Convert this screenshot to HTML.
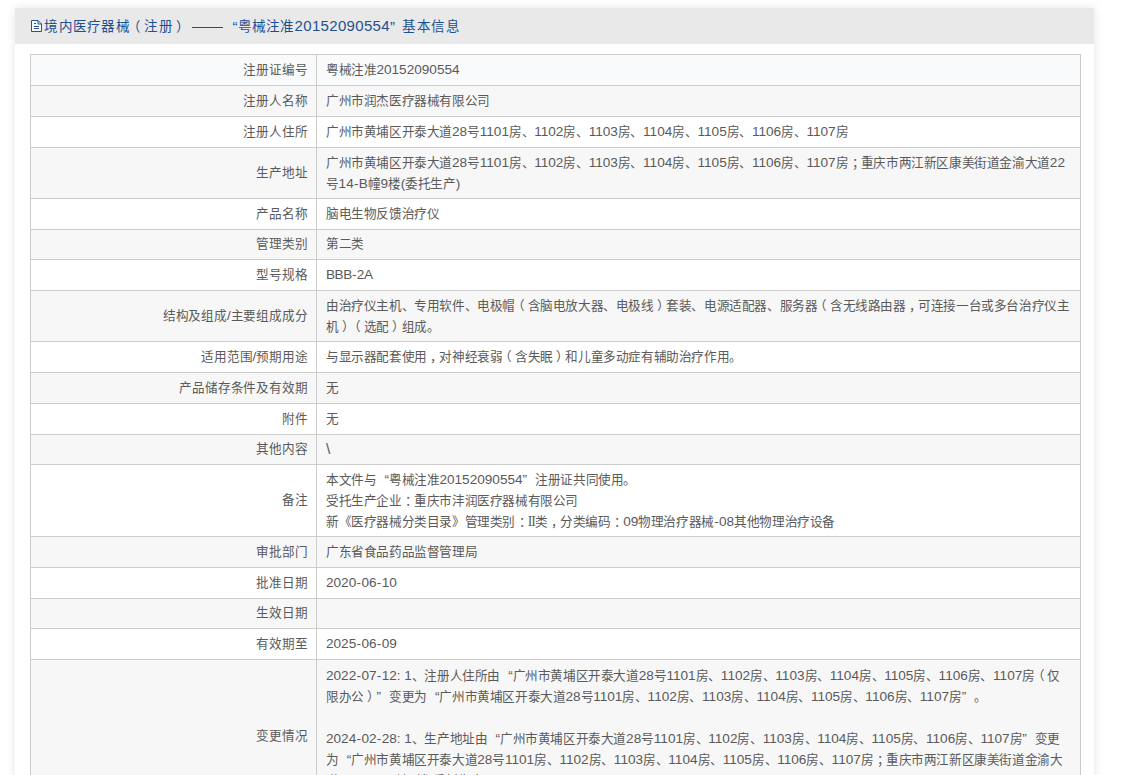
<!DOCTYPE html>
<html lang="zh-CN">
<head>
<meta charset="utf-8">
<style>
html,body{margin:0;padding:0;background:#fff;width:1128px;height:775px;overflow:hidden;}
body{font-family:"Liberation Sans",sans-serif;font-size:12.6px;color:#5a5a5a;text-spacing-trim:space-all;}
.panel{position:absolute;left:15px;top:8px;width:1079px;height:900px;background:#fff;box-shadow:0 0 9px rgba(0,0,0,0.11);}
.hd{position:absolute;left:0;top:0;width:1079px;height:36px;background:#e9e9e9;}
.hdt{position:absolute;top:8.8px;color:#1d5091;white-space:nowrap;line-height:20px;font-size:13.5px;}
.hdt .n{font-size:15px;}
.ico{position:absolute;left:13px;top:8px;}
.row{position:absolute;left:30px;width:1050px;box-sizing:border-box;border-top:1px solid #ccc;}
.row.g{background:#f7f7f7;}
.row.h{background:#f9fafc;}
.lb{position:absolute;right:772.5px;letter-spacing:-0.2px;line-height:21px;white-space:nowrap;text-align:right;}
.vl{position:absolute;left:296px;letter-spacing:-0.4px;line-height:21px;white-space:nowrap;}
.n{font-size:13.6px;letter-spacing:0;line-height:0;}
.hy{display:inline-block;padding:0 0.3px;font-size:13.6px;letter-spacing:0;line-height:0;}
.ql{display:inline-block;width:12.6px;text-align:right;font-size:13.6px;letter-spacing:0;line-height:0;}
.qr{display:inline-block;width:12.6px;text-align:left;font-size:13.6px;letter-spacing:0;line-height:0;}
.pl{position:relative;left:-3px;}
.pr{position:relative;left:3px;}
.pc{position:relative;left:3.5px;}
.r2{font-family:"Liberation Serif",serif;font-size:13.6px;letter-spacing:-0.9px;line-height:0;}
.vline{position:absolute;width:1px;background:#ccc;}
</style>
</head>
<body>
<div class="panel">
 <div class="hd">
  <svg class="ico" width="18" height="18" viewBox="0 0 18 18"><path d="M3.5 4.5H10L13.5 8V15.5H3.5Z" fill="#f4f7fb" stroke="#2f5288" stroke-width="1"/><path d="M10 4.5V8H13.5M6 7.5H8M6 10.5H11M6 12.5H11" fill="none" stroke="#2f5288" stroke-width="1"/></svg>
  <div class="hdt" style="left:29.3px;letter-spacing:1.3px">境内医疗器械<span class="pl">（</span>注册<span class="pr">）</span></div>
  <div style="position:absolute;left:177px;top:18.5px;width:31px;height:1px;background:#1d5091"></div>
  <div class="hdt" style="left:217.5px;font-size:15px">“</div>
  <div class="hdt" style="left:223px;letter-spacing:1.15px">粤械注准<span class="n" style="font-size:15px;letter-spacing:0.32px">20152090554</span></div>
  <div class="hdt" style="left:375px;font-size:15px">”</div>
  <div class="hdt" style="left:387.3px;letter-spacing:1.6px">基本信息</div>
 </div>
</div>
<div class="row h" style="top:54px;height:31px"><div class="lb" style="top:4.50px">注册证编号</div><div class="vl" style="top:4.50px">粤械注准<span class="n">20152090554</span></div></div>
<div class="row g" style="top:85px;height:31px"><div class="lb" style="top:4.50px">注册人名称</div><div class="vl" style="top:4.50px">广州市润杰医疗器械有限公司</div></div>
<div class="row" style="top:116px;height:31px"><div class="lb" style="top:4.50px">注册人住所</div><div class="vl" style="top:4.50px">广州市黄埔区开泰大道<span class="n">28</span>号<span class="n">1101</span>房、<span class="n">1102</span>房、<span class="n">1103</span>房、<span class="n">1104</span>房、<span class="n">1105</span>房、<span class="n">1106</span>房、<span class="n">1107</span>房</div></div>
<div class="row g" style="top:147px;height:51px"><div class="lb" style="top:14.50px">生产地址</div><div class="vl" style="top:5.00px">广州市黄埔区开泰大道<span class="n">28</span>号<span class="n">1101</span>房、<span class="n">1102</span>房、<span class="n">1103</span>房、<span class="n">1104</span>房、<span class="n">1105</span>房、<span class="n">1106</span>房、<span class="n">1107</span>房<span class="pc">；</span>重庆市两江新区康美街道金渝大道<span class="n">22</span><br>号<span class="n">14</span><span class="hy">-</span><span class="n">B</span>幢<span class="n">9</span>楼<span class="n">(</span>委托生产<span class="n">)</span></div></div>
<div class="row" style="top:198px;height:31px"><div class="lb" style="top:4.50px">产品名称</div><div class="vl" style="top:4.50px">脑电生物反馈治疗仪</div></div>
<div class="row g" style="top:229px;height:30px"><div class="lb" style="top:4.00px">管理类别</div><div class="vl" style="top:4.00px">第二类</div></div>
<div class="row" style="top:259px;height:31px"><div class="lb" style="top:4.50px">型号规格</div><div class="vl" style="top:4.50px"><span class="n" style="letter-spacing:-0.5px">BBB</span><span class="hy">-</span><span class="n" style="letter-spacing:-0.3px">2A</span></div></div>
<div class="row g" style="top:290px;height:51px"><div class="lb" style="top:14.50px">结构及组成<span class="n">/</span>主要组成成分</div><div class="vl" style="top:5.00px">由治疗仪主机、专用软件、电极帽<span class="pl">（</span>含脑电放大器、电极线<span class="pr">）</span>套装、电源适配器、服务器<span class="pl">（</span>含无线路由器<span class="pc">，</span>可连接一台或多台治疗仪主<br>机<span class="pr">）</span><span class="pl">（</span>选配<span class="pr">）</span>组成。</div></div>
<div class="row" style="top:341px;height:31px"><div class="lb" style="top:4.50px">适用范围<span class="n">/</span>预期用途</div><div class="vl" style="top:4.50px">与显示器配套使用<span class="pc">，</span>对神经衰弱<span class="pl">（</span>含失眠<span class="pr">）</span>和儿童多动症有辅助治疗作用。</div></div>
<div class="row g" style="top:372px;height:31px"><div class="lb" style="top:4.50px">产品储存条件及有效期</div><div class="vl" style="top:4.50px">无</div></div>
<div class="row" style="top:403px;height:31px"><div class="lb" style="top:4.50px">附件</div><div class="vl" style="top:4.50px">无</div></div>
<div class="row g" style="top:434px;height:30px"><div class="lb" style="top:4.00px">其他内容</div><div class="vl" style="top:4.00px"><span class="n" style="font-size:15.5px;position:relative;top:0.5px">\</span></div></div>
<div class="row" style="top:464px;height:72px"><div class="lb" style="top:25.00px">备注</div><div class="vl" style="top:5.00px">本文件与<span class="ql">“</span>粤械注准<span class="n">20152090554</span><span class="qr">”</span>注册证共同使用。<br>受托生产企业<span class="pc">：</span>重庆市沣润医疗器械有限公司<br>新《医疗器械分类目录》管理类别<span class="pc">：</span><span class="r2">II</span>类<span class="pc">，</span>分类编码<span class="pc">：</span><span class="n">09</span>物理治疗器械<span class="hy">-</span><span class="n">08</span>其他物理治疗设备</div></div>
<div class="row g" style="top:536px;height:31px"><div class="lb" style="top:4.50px">审批部门</div><div class="vl" style="top:4.50px">广东省食品药品监督管理局</div></div>
<div class="row" style="top:567px;height:31px"><div class="lb" style="top:4.50px">批准日期</div><div class="vl" style="top:4.50px"><span class="n">2020</span><span class="hy">-</span><span class="n">06</span><span class="hy">-</span><span class="n">10</span></div></div>
<div class="row g" style="top:598px;height:30px"><div class="lb" style="top:4.00px">生效日期</div><div class="vl" style="top:4.00px"></div></div>
<div class="row" style="top:628px;height:31px"><div class="lb" style="top:4.50px">有效期至</div><div class="vl" style="top:4.50px"><span class="n">2025</span><span class="hy">-</span><span class="n">06</span><span class="hy">-</span><span class="n">09</span></div></div>
<div class="row g" style="top:659px;height:154px"><div class="lb" style="top:66.00px">变更情况</div><div class="vl" style="top:5.50px"><span class="n">2022</span><span class="hy">-</span><span class="n">07</span><span class="hy">-</span><span class="n">12: 1</span>、注册人住所由<span class="ql">“</span>广州市黄埔区开泰大道<span class="n">28</span>号<span class="n">1101</span>房、<span class="n">1102</span>房、<span class="n">1103</span>房、<span class="n">1104</span>房、<span class="n">1105</span>房、<span class="n">1106</span>房、<span class="n">1107</span>房<span class="pl">（</span>仅<br>限办公<span class="pr">）</span><span class="qr">”</span>变更为<span class="ql">“</span>广州市黄埔区开泰大道<span class="n">28</span>号<span class="n">1101</span>房、<span class="n">1102</span>房、<span class="n">1103</span>房、<span class="n">1104</span>房、<span class="n">1105</span>房、<span class="n">1106</span>房、<span class="n">1107</span>房<span class="qr">”</span>。<br><br><span class="n">2024</span><span class="hy">-</span><span class="n">02</span><span class="hy">-</span><span class="n">28: 1</span>、生产地址由<span class="ql">“</span>广州市黄埔区开泰大道<span class="n">28</span>号<span class="n">1101</span>房、<span class="n">1102</span>房、<span class="n">1103</span>房、<span class="n">1104</span>房、<span class="n">1105</span>房、<span class="n">1106</span>房、<span class="n">1107</span>房<span class="qr">”</span>变更<br>为<span class="ql">“</span>广州市黄埔区开泰大道<span class="n">28</span>号<span class="n">1101</span>房、<span class="n">1102</span>房、<span class="n">1103</span>房、<span class="n">1104</span>房、<span class="n">1105</span>房、<span class="n">1106</span>房、<span class="n">1107</span>房<span class="pc">；</span>重庆市两江新区康美街道金渝大<br>道<span class="n">22</span>号<span class="n">14</span><span class="hy">-</span><span class="n">B</span>幢<span class="n">9</span>楼<span class="n">(</span>委托生产<span class="n">)</span><span class="qr">”</span><br><span class="n">2</span>、</div></div>
<div class="vline" style="left:30px;top:54px;height:800px"></div>
<div class="vline" style="left:316px;top:54px;height:800px"></div>
<div class="vline" style="left:1080px;top:54px;height:800px"></div>
</body>
</html>
